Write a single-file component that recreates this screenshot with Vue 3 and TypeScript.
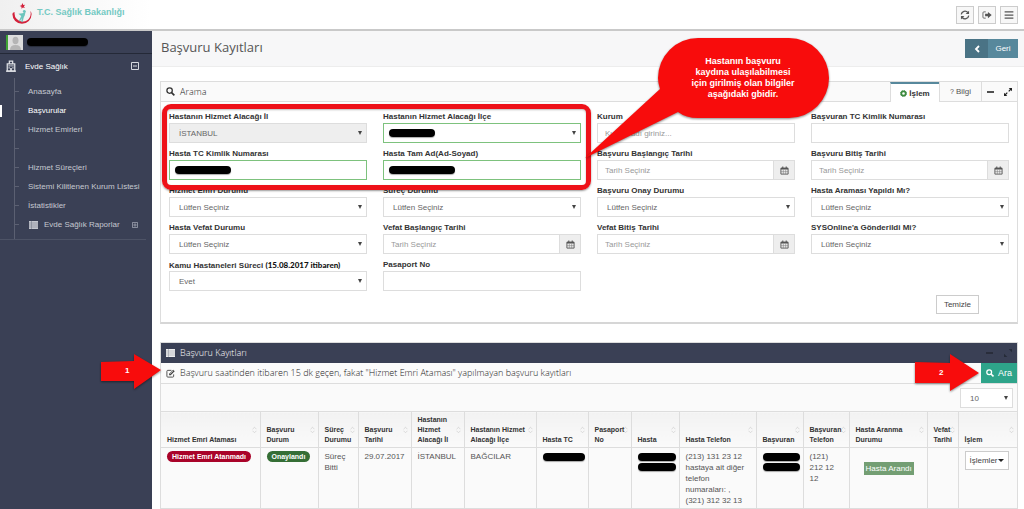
<script setup lang="ts">
import { ref } from 'vue'

type Kind = 'select' | 'text' | 'date'
interface Field {
  id: string
  label: string
  note?: string
  kind: Kind
  value?: string
  placeholder?: string
  disabled?: boolean
  valid?: boolean
  mask?: 'short' | 'medium' | 'long'
}

const pick = 'Lütfen Seçiniz'
const fields: Field[] = [
  { id: 'il', label: 'Hastanın Hizmet Alacağı İl', kind: 'select', value: 'İSTANBUL', disabled: true },
  { id: 'ilce', label: 'Hastanın Hizmet Alacağı İlçe', kind: 'select', value: '', valid: true, mask: 'short' },
  { id: 'kurum', label: 'Kurum', kind: 'text', placeholder: 'Kurum adı giriniz...' },
  { id: 'btc', label: 'Başvuran TC Kimlik Numarası', kind: 'text' },
  { id: 'htc', label: 'Hasta TC Kimlik Numarası', kind: 'text', valid: true, mask: 'medium' },
  { id: 'ad', label: 'Hasta Tam Ad(Ad-Soyad)', kind: 'text', valid: true, mask: 'long' },
  { id: 'bbas', label: 'Başvuru Başlangıç Tarihi', kind: 'date' },
  { id: 'bbit', label: 'Başvuru Bitiş Tarihi', kind: 'date' },
  { id: 'emir', label: 'Hizmet Emri Durumu', kind: 'select', value: pick },
  { id: 'surec', label: 'Süreç Durumu', kind: 'select', value: pick },
  { id: 'onay', label: 'Başvuru Onay Durumu', kind: 'select', value: pick },
  { id: 'arama', label: 'Hasta Araması Yapıldı Mı?', kind: 'select', value: pick },
  { id: 'vefat', label: 'Hasta Vefat Durumu', kind: 'select', value: pick },
  { id: 'vbas', label: 'Vefat Başlangıç Tarihi', kind: 'date' },
  { id: 'vbit', label: 'Vefat Bitiş Tarihi', kind: 'date' },
  { id: 'sys', label: "SYSOnline'a Gönderildi Mi?", kind: 'select', value: pick },
  { id: 'kamu', label: 'Kamu Hastaneleri Süreci', note: '(15.08.2017 itibaren)', kind: 'select', value: 'Evet' },
  { id: 'pas', label: 'Pasaport No', kind: 'text' },
]

const menu = ref([
  { text: 'Anasayfa', active: false },
  { text: 'Başvurular', active: true },
  { text: 'Hizmet Emirleri', active: false },
  { text: '', active: false },
  { text: 'Hizmet Süreçleri', active: false },
  { text: 'Sistemi Kilitlenen Kurum Listesi', active: false },
  { text: 'İstatistikler', active: false },
])

const columns = [
  { title: 'Hizmet Emri Ataması', w: 99 },
  { title: 'Başvuru Durum', w: 58 },
  { title: 'Süreç Durumu', w: 40 },
  { title: 'Başvuru Tarihi', w: 53 },
  { title: 'Hastanın Hizmet Alacağı İl', w: 53 },
  { title: 'Hastanın Hizmet Alacağı İlçe', w: 72 },
  { title: 'Hasta TC', w: 52 },
  { title: 'Pasaport No', w: 43 },
  { title: 'Hasta', w: 48 },
  { title: 'Hasta Telefon', w: 77 },
  { title: 'Başvuran', w: 47 },
  { title: 'Başvuran Telefon', w: 46 },
  { title: 'Hasta Aranma Durumu', w: 78 },
  { title: 'Vefat Tarihi', w: 31 },
  { title: 'İşlem', w: 59 },
]
</script>

<template>
  <div class="app">
    <header class="top">
      <a class="brand" href="#">
        <svg viewBox="0 0 24 28" width="22" height="26" aria-hidden="true">
          <path d="M1.500 13A10.500 10.500 0 1 0 22.500 13Q22.300 10.500 21 9.500A8.800 8.800 0 1 1 4 11Q2 10.500 1.500 13Z" fill="#d3213b" />
          <path d="M12.500 1l.9 2 2.100-.2-1.400 1.600 1 1.900-2.100-.6-1.500 1.500-.1-2.100-1.900-1 2-.7z" fill="#d3213b" />
          <circle cx="14.500" cy="10" r="1.500" fill="#6cc5bd" />
          <path d="M8 12.500l4.500-.5 3.500-2-1 4.500-1 2-1.500 5.500-1.300-.4.500-4-2 3.500-1-.9 2.500-5z" fill="#6cc5bd" />
        </svg>
        <span>T.C. Sağlık Bakanlığı</span>
      </a>
      <nav class="tools">
        <button type="button" aria-label="Yenile">
          <svg viewBox="0 0 16 16" width="10" height="10"><path d="M2 7a6 6 0 0 1 10.500-3M14 9a6 6 0 0 1-10.500 3" fill="none" stroke="#555" stroke-width="2" /><path d="M14.500 1v5.500H9zM1.500 15V9.500H7z" fill="#555" /></svg>
        </button>
        <button type="button" aria-label="Çıkış">
          <svg viewBox="0 0 16 16" width="10" height="10"><path d="M6 3H3Q1.500 3 1.500 4.500v7Q1.500 13 3 13h3" fill="none" stroke="#666" stroke-width="1.500" /><path d="M5 6h4.500V3L15.500 8l-6 5v-3H5z" fill="#555" /></svg>
        </button>
        <button type="button" aria-label="Menü">
          <svg viewBox="0 0 16 16" width="10" height="10"><path d="M1 3h14M1 8h14M1 13h14" stroke="#555" stroke-width="2" /></svg>
        </button>
      </nav>
    </header>

    <div class="shell">
      <aside class="side">
        <div class="user">
          <svg viewBox="0 0 17 15" width="17" height="15" aria-hidden="true">
            <path d="M0 0h17v15H0z" fill="#ddd" /><path d="M0 0h2v15H0z" fill="#3fa535" />
            <ellipse cx="9.500" cy="5.500" rx="3" ry="3.800" fill="#b5b5b5" /><path d="M4 15q0-5 5.500-5T15 15z" fill="#b5b5b5" />
          </svg>
          <span class="mask user-mask"></span>
        </div>
        <a class="group" href="#">
          <svg viewBox="0 0 12 14" width="10" height="12" aria-hidden="true">
            <path d="M1.500 13V4.500h9V13zM4 4V1h4v3" fill="none" stroke="#dfe1e6" stroke-width="1.500" />
            <path d="M3 6h1.500v1.500H3zM5.300 6h1.500v1.500H5.300zM7.600 6h1.500v1.500H7.600zM3 8.500h1.500V10H3zM7.600 8.500h1.500V10H7.600zM5 9.500h2V13H5zM0 12.500h12V14H0z" fill="#dfe1e6" />
          </svg>
          <span>Evde Sağlık</span>
          <svg class="toggle" viewBox="0 0 8 8" width="8" height="8" aria-hidden="true"><path d="M.5.5h7v7h-7zM2 4h4" fill="none" stroke="#d5d8de" /></svg>
        </a>
        <ul class="menu">
          <li v-for="(m, i) in menu" :key="i" :class="{ active: m.active }"><a v-if="m.text" href="#">{{ m.text }}</a></li>
          <li>
            <a class="sub" href="#">
              <svg viewBox="0 0 9 8" width="9" height="8" aria-hidden="true"><path d="M0 0h9v8H0z" fill="#c3c6ce" /><path d="M0 2h9M0 4h9M0 6h9M2.500 0v8" stroke="#6d7282" stroke-width=".5" /></svg>
              <span>Evde Sağlık Raporlar</span>
              <svg class="toggle" viewBox="0 0 7 7" width="6" height="6" aria-hidden="true"><path d="M.5.5h6v6h-6zM1.500 3.500h4M3.500 1.500v4" fill="none" stroke="#9da2af" /></svg>
            </a>
          </li>
        </ul>
      </aside>

      <main>
        <div class="ribbon">
          <h1>Başvuru Kayıtları</h1>
          <button class="back" type="button">
            <span class="chev"><svg viewBox="0 0 6 8" width="6" height="8"><path d="M5 1L2 4l3 3" fill="none" stroke="#fff" stroke-width="1.800" /></svg></span>
            <span class="back-text">Geri</span>
          </button>
        </div>

        <section class="panel search">
          <div class="bar">
            <svg viewBox="0 0 10 10" width="9" height="9" aria-hidden="true"><circle cx="4" cy="4" r="3" fill="none" stroke="#333" stroke-width="1.400" /><path d="M6.200 6.200L9.300 9.300" stroke="#333" stroke-width="1.800" /></svg>
            <h2>Arama</h2>
            <div class="tabs">
              <button class="tab on" type="button">
                <svg viewBox="0 0 8 8" width="7" height="7"><circle cx="4" cy="4" r="2.500" fill="none" stroke="#3d8b40" stroke-width="2" /><circle cx="4" cy="4" r="3.500" fill="none" stroke="#3d8b40" stroke-dasharray="1.400 1.350" /></svg>
                İşlem
              </button>
              <button class="tab info" type="button"><small>?</small> Bilgi</button>
              <button class="tab icon" type="button" aria-label="Küçült"><svg viewBox="0 0 8 8" width="7" height="8"><path d="M0 4h8" stroke="#222" stroke-width="1.800" /></svg></button>
              <button class="tab icon" type="button" aria-label="Genişlet"><svg viewBox="0 0 8 8" width="8" height="8"><path d="M8 0v3.300L4.700 0zM0 8V4.700L3.300 8z" fill="#222" /><path d="M7 1L4.700 3.300M1 7l2.300-2.300" stroke="#222" stroke-width="1.200" /></svg></button>
            </div>
          </div>

          <form class="fields" @submit.prevent>
            <div v-for="f in fields" :key="f.id" class="field">
              <label :for="f.id">{{ f.label }} <b v-if="f.note">{{ f.note }}</b></label>
              <div v-if="f.kind === 'select'" class="stack">
                <select :id="f.id" :disabled="f.disabled" :class="{ valid: f.valid }"><option>{{ f.value }}</option></select>
                <i class="arrow"></i>
                <span v-if="f.mask" class="mask" :class="f.mask"></span>
              </div>
              <div v-else-if="f.kind === 'date'" class="date">
                <input :id="f.id" type="text" placeholder="Tarih Seçiniz" />
                <button type="button" aria-label="Takvim">
                  <svg viewBox="0 0 10 10" width="9" height="9"><path d="M1 2.500h8v6.500H1z" fill="none" stroke="#555" /><path d="M1 2h8v2H1zM2.500.5h1.200v2H2.500zM6.300.5h1.200v2H6.300z" fill="#555" /><path d="M1 6.300h8M3.700 4v5M6.300 4v5" stroke="#777" stroke-width=".6" /></svg>
                </button>
              </div>
              <div v-else class="stack">
                <input :id="f.id" type="text" :placeholder="f.placeholder" :class="{ valid: f.valid }" />
                <span v-if="f.mask" class="mask" :class="f.mask"></span>
              </div>
            </div>
            <div class="highlight"></div>
            <div class="callout">
              <svg viewBox="0 0 246 124" width="246" height="124" aria-hidden="true">
                <path d="M114 2H205A40 40 0 0 1 205 82H114Q102 82 94 76L1 122L76 53Q74 47 74 42A40 40 0 0 1 114 2Z" fill="#f80c0c" />
              </svg>
              <p>Hastanın başvuru kaydına ulaşılabilmesi için girilmiş olan bilgiler aşağıdaki gbidir.</p>
            </div>
          </form>
          <div class="actions"><button class="plain" type="button">Temizle</button></div>
        </section>

        <section class="panel results">
          <div class="bar dark">
            <svg viewBox="0 0 9 8" width="9" height="8" aria-hidden="true"><path d="M0 0h9v8H0z" fill="#eee" /><path d="M0 2h9M0 4h9M0 6h9M2.500 0v8" stroke="#888d99" stroke-width=".5" /></svg>
            <h2>Başvuru Kayıtları</h2>
            <div class="dim">
              <svg viewBox="0 0 8 8" width="7" height="8"><path d="M0 4h8" stroke="#20242f" stroke-width="1.500" /></svg>
              <svg viewBox="0 0 8 8" width="8" height="8"><path d="M8 0v3.300L4.700 0zM0 8V4.700L3.300 8z" fill="#262b38" /></svg>
            </div>
          </div>
          <div class="bar note">
            <svg viewBox="0 0 10 10" width="9" height="9" aria-hidden="true"><path d="M6 1.500H2Q1 1.500 1 2.500V8Q1 9 2 9h5.500Q8.500 9 8.500 8V6" fill="none" stroke="#444" /><path d="M3.500 7V5.200L8 .7l1.700 1.700L5.200 7z" fill="#444" /><path d="M4.500 5.500L8 2" stroke="#fff" stroke-width=".6" /></svg>
            <h2>Başvuru saatinden itibaren 15 dk geçen, fakat "Hizmet Emri Ataması" yapılmayan başvuru kayıtları</h2>
            <button class="find" type="button">
              <svg viewBox="0 0 10 10" width="8" height="8"><circle cx="4" cy="4" r="3" fill="none" stroke="#fff" stroke-width="1.600" /><path d="M6.200 6.200L9.300 9.300" stroke="#fff" stroke-width="2" /></svg>
              Ara
            </button>
            <div class="pointer one">
              <svg viewBox="0 0 64 38" width="64" height="38" aria-hidden="true"><path d="M2 9L35 8V1L62 17L35 36V28H2Z" fill="#f80c0c" /></svg>
              <b>1</b>
            </div>
            <div class="pointer two">
              <svg viewBox="0 0 68 40" width="68" height="40" aria-hidden="true"><path d="M2 9L37 10V1L66 20L37 38V30H2Z" fill="#f80c0c" /></svg>
              <b>2</b>
            </div>
          </div>
          <div class="pager">
            <div class="stack">
              <select aria-label="Sayfa boyutu"><option>10</option></select>
              <i class="arrow"></i>
            </div>
          </div>
          <table>
            <colgroup><col v-for="c in columns" :key="c.title" :style="{ width: c.w + 'px' }" /></colgroup>
            <thead>
              <tr>
                <th v-for="c in columns" :key="c.title" scope="col">
                  {{ c.title }}
                  <svg class="sort" viewBox="0 0 6 8" width="5" height="8" aria-hidden="true"><path d="M.7 3L3 .7 5.300 3M.7 5L3 7.300 5.300 5" fill="none" stroke="#ccc" stroke-width=".8" /></svg>
                </th>
              </tr>
            </thead>
            <tbody>
              <tr>
                <td><span class="badge red">Hizmet Emri Atanmadı</span></td>
                <td><span class="badge green">Onaylandı</span></td>
                <td>Süreç Bitti</td>
                <td class="tight">29.07.2017</td>
                <td class="tight">İSTANBUL</td>
                <td>BAĞCILAR</td>
                <td><span class="mask cell-mask"></span></td>
                <td></td>
                <td><span class="mask cell-mask"></span><span class="mask cell-mask"></span></td>
                <td>(213) 131 23 12<br />hastaya ait diğer<br />telefon<br />numaraları: ,<br />(321) 312 32 13</td>
                <td><span class="mask cell-mask"></span><span class="mask cell-mask"></span></td>
                <td>(121)<br />212 12<br />12</td>
                <td class="called"><span class="tag">Hasta Arandı</span></td>
                <td></td>
                <td class="ops"><button class="plain" type="button">İşlemler<i></i></button></td>
              </tr>
              <tr class="next"><td v-for="c in columns" :key="c.title"></td></tr>
            </tbody>
          </table>
        </section>
      </main>
    </div>
  </div>
</template>

<style>
html, body { overflow: hidden; }
</style>

<style scoped>
.app, .app * { box-sizing: border-box; }
.app {
  display: flex; flex-direction: column; height: 100vh; overflow: hidden;
  font: 8px/11px "Liberation Sans", Arial, sans-serif; color: #555; background: #fff;
}
button, input, select { font: inherit; color: inherit; margin: 0; border-radius: 0; }
a { color: inherit; text-decoration: none; }
h1, h2, p, ul { margin: 0; padding: 0; font-weight: 400; }
svg { flex: none; display: block; }

.top {
  display: flex; justify-content: space-between; align-items: center; flex: none; height: 31px;
  padding: 0 6px 0 11px; border-bottom: 2px solid #c9c9c9;
  background: linear-gradient(90deg, #f0f0f0, #fff 150px);
}
.brand { display: flex; gap: 4px; color: #74c9c3; font-size: 9px; font-weight: 700; }
.brand span { padding-top: 5px; }
.tools { display: flex; gap: 4px; }
.tools button {
  display: grid; place-items: center; width: 18px; height: 18px; padding: 0;
  border: 1px solid #ccc; background: #f7f7f7;
}

.shell { display: flex; flex: 1; min-height: 0; }
.side { flex: none; width: 152px; background: #3a4055; color: #c5c8d0; }
.user { display: flex; align-items: center; gap: 4px; height: 23px; padding-left: 6px; border-bottom: 1px solid #242937; }
.mask { display: block; background: #000; border-radius: 4px; box-shadow: 0 1px 1px #0005; }
.user-mask { width: 61px; height: 8px; }
.group { display: flex; align-items: center; height: 24px; gap: 9px; padding: 0 13px 0 6px; color: #fff; }
.toggle { margin-left: auto; }
.menu { list-style: none; padding: 4px 0 5px; border-bottom: 1px solid #4d5366; margin-right: 6px; background: linear-gradient(90deg, transparent 14px, #5b6072 14px, #5b6072 15px, transparent 15px); }
.menu li { display: flex; align-items: center; height: 19px; }
.menu li::before { content: ""; width: 4px; height: 1px; margin-left: 15px; margin-right: 9px; background: #5b6072; flex: none; }
.menu li.active { color: #fff; background: linear-gradient(#fff, #fff) left center / 2px 12px no-repeat; }
.menu a { white-space: nowrap; }
.menu .sub { display: flex; flex: 1; align-items: center; gap: 6px; padding-left: 1px; padding-right: 8px; }

main { flex: 1; min-width: 0; }
.ribbon {
  display: flex; justify-content: space-between; align-items: center; height: 36px;
  padding: 0 6px 0 9px; background: #f7f7f8; border-bottom: 1px solid #ededed;
}
h1 { font: 13px/20px "Open Sans", sans-serif; color: #555; padding-bottom: 4px; }
.back { display: flex; width: 53px; height: 19px; padding: 0; border: 0; background: #57889c; color: #fff; }
.chev { display: grid; place-items: center; width: 23px; height: 19px; background: #4a7385; }
.back-text { flex: 1; line-height: 19px; text-align: center; }

.panel { margin: 0 6px 0 8px; border: 1px solid #ddd; }
.search { margin-top: 14px; border-bottom: 2px solid #d6d6d6; }
.bar { display: flex; align-items: center; gap: 5px; height: 20px; padding-left: 5px; background: #fafafa; border-bottom: 1px solid #ddd; }
h2 { font: 300 9px/14px "Open Sans", sans-serif; color: #222; white-space: nowrap; }
.tabs { display: flex; margin-left: auto; align-self: stretch; }
.tab { display: flex; align-items: center; justify-content: center; gap: 2px; height: 19px; padding: 0; border: 0; border-left: 1px solid #ddd; background: none; }
.tab.on { width: 49px; height: 20px; border-top: 2px solid #57889c; background: #fff; font-weight: 700; color: #333; }
.tab small { font-size: 7px; }
.tab.info { width: 42px; }
.tab.icon { width: 18px; }
.tab.icon + .icon { border-left: 0; }

.fields {
  position: relative; display: grid; grid-template-columns: repeat(4, minmax(0, 1fr));
  column-gap: 16px; row-gap: 6px; padding: 9px 8px 0;
}
.fields label { display: block; height: 12px; line-height: 12px; font-weight: 700; color: #333; white-space: nowrap; }
.fields label b { font-family: Lato, sans-serif; color: #111; }
.field { height: 31px; }
input, select {
  appearance: none; display: block; width: 100%; min-width: 0; height: 20px; padding: 0 7px;
  border: 1px solid #ddd; background: #fff; color: #666; outline: 0;
}
select { padding: 0 9px; }
select:disabled { background: #eee; opacity: 1; }
input::placeholder { color: #999; }
.valid { border-color: #7dc27d; }
.stack { display: grid; align-items: center; }
.stack > * { grid-area: 1 / 1; }
.arrow { justify-self: end; margin-right: 5px; border: 2px solid transparent; border-top: 4px solid #444; border-bottom: 0; pointer-events: none; }
.stack .mask { height: 8px; margin-left: 6px; }
.short { width: 46px; }
.medium { width: 56px; }
.long { width: 66px; }
.date { display: flex; }
.date input { flex: 1; }
.date button { display: grid; place-items: center; width: 21px; height: 20px; padding: 0; border: 1px solid #ddd; border-left: 0; background: #eee; }

.highlight { position: absolute; left: 1px; top: 2px; width: calc(50% + 1px); height: 86px; border: 5px solid #ee1119; border-radius: 9px; box-shadow: 0 1px 2px #0006, inset 0 1px 2px #0004; }
.callout { position: absolute; left: calc(50% - 5px); top: -66px; width: 246px; }
.callout svg, .pointer svg { filter: drop-shadow(0 1px 1px #0007); }
.callout p { position: absolute; left: 104px; top: 20px; width: 110px; font-size: 9px; line-height: 11px; font-weight: 700; color: #fff; text-align: center; }
.actions { display: flex; justify-content: flex-end; padding: 5px 38px 8px 0; }
.plain { height: 19px; padding: 0 7px; border: 1px solid #ccc; background: #fff; color: #444; }

.results { margin-top: 18px; background: #fafafa; }
.dark { background: #3a4055; border: 0; }
.dark h2 { color: #fff; }
.dim { display: flex; gap: 11px; margin-left: auto; padding-right: 5px; }
.note { position: relative; height: 21px; background: #fbfbfb; }
.find { display: flex; align-items: center; justify-content: center; gap: 4px; width: 36px; height: 20px; padding: 0; margin-left: auto; border: 0; background: #2ea48a; color: #fff; font-size: 9px; }
.pointer { position: absolute; }
.pointer b { position: absolute; top: 12px; left: 26px; color: #fff; }
.one { left: -62px; top: -10px; }
.two { right: 36px; top: -10px; }
.two b { top: 14px; }
.pager { display: flex; justify-content: flex-end; height: 27px; padding: 4px 4px 0; }
.pager .stack { width: 53px; height: 20px; }

table { width: 100%; table-layout: fixed; border-collapse: collapse; }
th, td { border-right: 1px solid #ddd; border-bottom: 1px solid #ddd; text-align: left; }
th:last-child, td:last-child { border-right: 0; }
th { position: relative; height: 36px; padding: 2px 0 2px 6px; border-top: 1px solid #ddd; vertical-align: bottom; font-size: 7px; line-height: 10px; color: #333; background: linear-gradient(#f2f2f2, #fafafa); }
.sort { position: absolute; right: 3px; top: 14px; }
td { height: 60px; padding: 3px 3px 2px 6px; vertical-align: top; white-space: nowrap; }
td:nth-child(3) { white-space: normal; }
.tight { padding-right: 0; }
.next td { height: 12px; }
.badge { display: inline-block; height: 11px; padding: 0 5px; border-radius: 6px; font-size: 7px; font-weight: 700; color: #fff; }
.red { background: #a90329; }
.green { background: #356e35; }
.cell-mask { width: 100%; min-width: 36px; height: 8px; margin-top: 2px; }
.tag { display: inline-block; padding: 1px 2px; background: #739e73; color: #fff; }
.called { padding-top: 14px; padding-left: 14px; }
.plain i { display: inline-block; border: 3px solid transparent; border-top-color: #222; border-bottom: 0; vertical-align: middle; }
.ops .plain { padding: 0 4px; }
</style>
